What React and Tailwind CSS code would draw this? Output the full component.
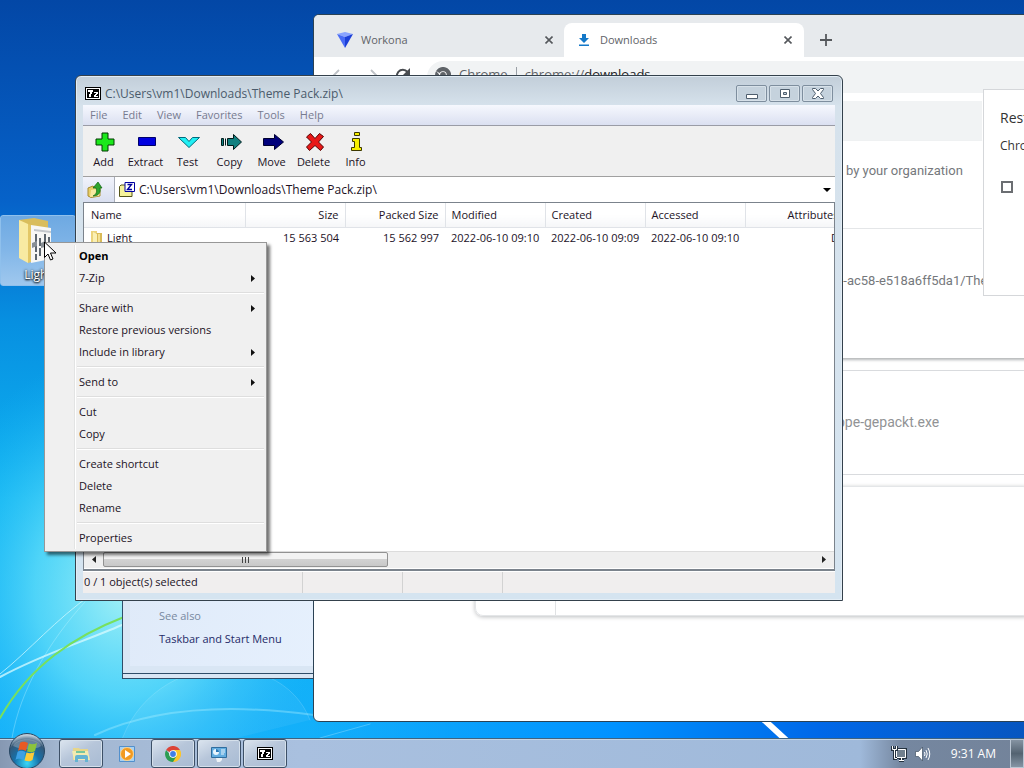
import React from "react";

const menuGroups = [
  [{ label: "Open", bold: true }, { label: "7-Zip", sub: true }],
  [
    { label: "Share with", sub: true },
    { label: "Restore previous versions" },
    { label: "Include in library", sub: true },
  ],
  [{ label: "Send to", sub: true }],
  [{ label: "Cut" }, { label: "Copy" }],
  [{ label: "Create shortcut" }, { label: "Delete" }, { label: "Rename" }],
  [{ label: "Properties" }],
];

const columns = [
  { label: "Name", value: "Light", width: "w-[161px]", align: "text-left pl-[7px]" },
  { label: "Size", value: "15 563 504", width: "w-[100px]", align: "text-right pr-[6px]" },
  { label: "Packed Size", value: "15 562 997", width: "w-[100px]", align: "text-right pr-[6px]" },
  { label: "Modified", value: "2022-06-10 09:10", width: "w-[100px]", align: "text-left pl-[6px]" },
  { label: "Created", value: "2022-06-10 09:09", width: "w-[100px]", align: "text-left pl-[6px]" },
  { label: "Accessed", value: "2022-06-10 09:10", width: "w-[100px]", align: "text-left pl-[6px]" },
  { label: "Attributes", value: "D", width: "w-[100px]", align: "text-right pr-[6px]" },
];

const toolbarItems = [
  {
    label: "Add",
    icon: <path d="M7 1h6v6h6v6h-6v6H7v-6H1V7h6z" fill="#1be81b" stroke="#003800" />,
  },
  {
    label: "Extract",
    icon: <path d="M1.5 5.5h17v8h-17z" fill="#0000e0" stroke="#00006a" />,
  },
  {
    label: "Test",
    icon: <path d="M-.5 5.5h7l3.5 4 3.500-4h7L10 15.500z" fill="#20f0f4" stroke="#006a7c" />,
  },
  {
    label: "Copy",
    icon: (
      <g fill="#108080" stroke="#001c1c">
        <path d="M.5 6.500h2v7h-2zM4.500 6.500v7" />
        <path d="M6.500 6.500h6v-4l8 7.500-8 7.500v-4h-6z" />
      </g>
    ),
  },
  {
    label: "Move",
    icon: <path d="M.5 6.500h11v-4l9 7.500-9 7.500v-4H.5z" fill="#00007c" stroke="#000030" />,
  },
  {
    label: "Delete",
    icon: (
      <path
        d="M5.500 1.500 10 6.500l4.500-5 4 3-5 5.500 5 5-3 3.500-5.500-5-5.500 5-3-3.500 5-5-5-5z"
        fill="#e81818"
        stroke="#500"
      />
    ),
  },
  {
    label: "Info",
    icon: (
      <path
        d="M7.500.5h5v3h-5zM5.500 6.500h7v9h2v3h-10v-3h3v-6h-2z"
        fill="#f8f000"
        stroke="#3c3800"
      />
    ),
  },
];

const segoe = "font-['Open_Sans','Noto_Sans',sans-serif]";

const SevenZipIcon = () => (
  <svg className="w-4 h-[13px] shrink-0" viewBox="0 0 16 13" shapeRendering="crispEdges">
    <rect width="16" height="13" fill="#000" />
    <rect x="1" y="1" width="14" height="11" fill="#fff" />
    <rect x="2" y="2" width="12" height="9" fill="#000" />
    <path d="M3 3h5v2H7v2H6v3H4V7h1V5H3z" fill="#fff" />
    <path d="M9 5h4v2h-1v1h-1v1h2v1H9V8h1V7h1V6H9z" fill="#fff" />
  </svg>
);

const ChromeIcon = ({ className, mono }) => (
  <svg className={className} viewBox="0 0 16 16">
    <path d="M8 8 1.100 4A8 8 0 0 1 15 4z" fill={mono ? "#5f6368" : "#dc4437"} />
    <path d="M8 8V4h7a8 8 0 0 1-7 12z" fill={mono ? "#5f6368" : "#fbc52c"} />
    <path d="M8 16A8 8 0 0 1 1.100 4L8 12l3.500-2z" fill={mono ? "#5f6368" : "#2c9d52"} />
    <circle cx="8" cy="8" r="3.800" fill="#fff" />
    <circle cx="8" cy="8" r="2.900" fill={mono ? "#5f6368" : "#3f7fe8"} />
  </svg>
);

const CloseIcon = () => (
  <svg className="w-2 h-2" viewBox="0 0 8 8">
    <path d="m.5.5 7 7m0-7-7 7" stroke="#55585c" strokeWidth="1.600" />
  </svg>
);

const Wallpaper = () => (
  <svg
    className="absolute inset-0 w-full h-full"
    viewBox="0 0 1024 768"
    preserveAspectRatio="none"
    aria-hidden="true"
  >
    <defs>
      <linearGradient id="sky" x1="0" y1="0" x2="0" y2="1">
        <stop offset="0" stopColor="#0347a6" />
        <stop offset=".26" stopColor="#0662c9" />
        <stop offset=".42" stopColor="#0790e1" />
        <stop offset=".65" stopColor="#0fb4f2" />
        <stop offset="1" stopColor="#14affb" />
      </linearGradient>
      <linearGradient id="east" x1="0" y1="0" x2="1" y2="0">
        <stop offset=".3" stopColor="#0092ff" stopOpacity="0" />
        <stop offset=".6" stopColor="#0092ff" />
        <stop offset=".8" stopColor="#0068e8" />
        <stop offset="1" stopColor="#0756c0" />
      </linearGradient>
      <radialGradient id="glow">
        <stop offset="0" stopColor="#b4f8f6" stopOpacity=".9" />
        <stop offset=".45" stopColor="#70e6fa" stopOpacity=".65" />
        <stop offset="1" stopColor="#18b8f8" stopOpacity="0" />
      </radialGradient>
    </defs>
    <rect width="1024" height="768" fill="url(#sky)" />
    <rect y="700" width="1024" height="68" fill="url(#east)" />
    <ellipse cx="125" cy="590" rx="200" ry="240" fill="url(#glow)" />
    <g fill="none" strokeLinecap="round">
      <path d="M115 768C130 650 280 640 310 720" fill="#fff" fillOpacity=".06" stroke="#fff" strokeOpacity=".14" />
      <path d="M0 677C40 655 80 643 122 625" stroke="#d8fbff" strokeWidth="2" strokeOpacity=".75" />
      <path d="M0 674C30 650 55 620 92 594" stroke="#d8fbff" strokeOpacity=".7" />
      <path d="M12 738C20 690 50 640 85 602" stroke="#d8fbff" strokeOpacity=".3" />
      <path d="M0 718C30 665 75 636 124 617" stroke="#78e05c" strokeWidth="2" />
      <path d="M95 735C160 705 240 705 314 715" stroke="#b8f4ff" strokeWidth="2" strokeOpacity=".35" />
      <path d="M320 738 370 724" stroke="#9fe4ff" strokeOpacity=".4" />
      <path d="m762 718 24 22" stroke="#fff" strokeWidth="6" />
    </g>
  </svg>
);

const BrowserTab = ({ icon, title, active }) => (
  <div
    className={`flex h-[34px] items-center text-[#5f6368] ${active ? "w-[240px] pl-3 pr-2 rounded-t-lg bg-white" : "w-[242px] pl-[15px] pr-[7px]"}`}
  >
    {icon}
    <span className="flex-1 pl-2 text-[11px]">{title}</span>
    <button type="button" aria-label={`Close ${title}`} className="p-1">
      <CloseIcon />
    </button>
  </div>
);

const BrowserWindow = () => (
  <section
    className={`absolute left-[313px] -right-2 top-[14px] h-[708px] overflow-hidden rounded-md border border-[#2b4254] bg-white ${segoe}`}
  >
    <div className="flex h-[42px] pt-2 pl-2 items-start bg-[#e7eaed]">
      <BrowserTab
        title="Workona"
        icon={
          <svg className="w-4 h-4" viewBox="0 0 16 16">
            <path d="M0 2 8 0l8 2-8 3z" fill="#8aa4ff" />
            <path d="m0 2 8 3v11z" fill="#4a6cf5" />
            <path d="m16 2-8 3v11z" fill="#1c3fd8" />
          </svg>
        }
      />
      <BrowserTab
        active
        title="Downloads"
        icon={
          <svg className="w-4 h-4" viewBox="0 0 16 16">
            <path d="M6 2h4v4h3l-5 5-5-5h3zM3 12.500h10v1.500H3z" fill="#1478c8" />
          </svg>
        }
      />
      <button type="button" aria-label="New tab" className="p-4 pt-[11px]">
        <svg className="w-3 h-3" viewBox="0 0 12 12">
          <path d="M6 0v12M0 6h12" stroke="#55585c" strokeWidth="1.800" />
        </svg>
      </button>
    </div>

    <div className="flex h-9 pt-1 pl-[17px] items-start border-b border-[#dcdee1]">
      <div className="flex pt-[7px] gap-4">
        <button type="button" aria-label="Back">
          <svg className="w-4 h-4" viewBox="0 0 16 16" fill="none">
            <path d="M15 8H2m6-6L2 8l6 6" stroke="#bdc1c6" strokeWidth="1.800" />
          </svg>
        </button>
        <button type="button" aria-label="Forward">
          <svg className="w-4 h-4" viewBox="0 0 16 16" fill="none">
            <path d="M1 8h13M8 2l6 6-6 6" stroke="#bdc1c6" strokeWidth="1.800" />
          </svg>
        </button>
        <button type="button" aria-label="Reload">
          <svg className="w-4 h-4" viewBox="0 0 16 16" fill="none">
            <path d="M13.500 10A6 6 0 1 1 12.500 4" stroke="#484c50" strokeWidth="2" />
            <path d="M15 0v7H8z" fill="#484c50" />
          </svg>
        </button>
      </div>
      <div className="flex h-8 ml-4 pl-2 flex-1 items-center rounded-l-full bg-[#f1f3f4] text-[13px] text-[#5f6368]">
        <ChromeIcon mono className="w-4 h-4 -mt-1" />
        <span className="pl-2 pb-1">Chrome</span>
        <span className="h-4 mx-2 mb-1 border-l border-[#9aa0a6]" />
        <span className="pb-1">
          chrome://<span className="text-[#202124]">downloads</span>
        </span>
      </div>
    </div>

    {/* downloads page */}
    <div className="font-[Roboto,sans-serif] text-[13px] text-[#75787c]">
      <div className="mt-2 h-10 w-[668px] bg-[#f1f3f4]" />
      <div className="ml-[161px] h-[217px] rounded-bl-lg shadow-[0_2px_3px_#b4b6b8] whitespace-nowrap">
        <p className="h-[88px] w-[507px] pt-5 pl-[371px] border-b border-[#e4e6e8]">by your organization</p>
        <p className="pt-[42px] pl-[361px]">0-ac58-e518a6ff5da1/Theme Pack.zip</p>
      </div>
      <div className="ml-[161px] mt-3 h-[105px] border-y border-[#d9dbde]">
        <p className="pt-[41px] pl-[354px] text-[14px] text-[#919395]">oppe-gepackt.exe</p>
      </div>
      <div className="ml-[161px] mt-[11px] flex h-[130px] rounded-lg border border-[#e4e6e8] shadow-[0_1px_4px_#bcbec0]">
        <div className="w-20 border-r border-[#e0e2e4]" />
      </div>
    </div>

    {/* restore prompt */}
    <aside className="absolute right-0 top-[74px] flex w-12 h-[207px] pl-4 pt-[18px] flex-col overflow-hidden border border-[#d5d7da] bg-white whitespace-nowrap text-[#333]">
      <h2 className="text-[14px] leading-5">Restore pages?</h2>
      <p className="pt-2 text-[12px] leading-5">Chrome didn't shut down correctly.</p>
      <label className="flex pt-[25px] pl-px gap-4">
        <input
          type="checkbox"
          aria-label="Send crash reports"
          className="w-3 h-3 shrink-0 appearance-none border-2 border-[#6b6e72] bg-white"
        />
      </label>
    </aside>
  </section>
);

const ControlPanelWindow = () => (
  <section
    className={`absolute left-[122px] top-[520px] w-[300px] h-[159px] border border-[#2f4d68] bg-[#d9e6f4] ${segoe}`}
  >
    <div className="flex h-[153px] pl-[7px] pb-[7px] border-b border-[#2f4d68]">
      <div className="flex-1 pt-[85px] pl-[29px] bg-[linear-gradient(100deg,#dfeaf9,#e9f3ff)] text-[11px]">
        <p className="leading-5 text-[#7889a0]">See also</p>
        <a href="#taskbar" className="block pt-[3px] leading-5 text-[#1f2b68]">
          Taskbar and Start Menu
        </a>
      </div>
    </div>
  </section>
);

const captionButton =
  "flex w-[31px] h-[17px] border border-[#7e8e9e] rounded-[2px] bg-[#c5d2dd] shadow-[inset_0_0_0_1px_#d7e1e9] items-center justify-center";

const ArchiveWindow = () => (
  <section
    className={`absolute left-[75px] top-[75px] flex w-[768px] h-[526px] px-[7px] pb-[7px] flex-col border border-[#34414c] rounded-t-md bg-[linear-gradient(180deg,#c2ced9_0px,#d6e2ec_30px,#d5e4f0_100%)] shadow-[inset_0_0_0_1px_#e3edf5] text-[11px] text-[#22121f] ${segoe}`}
  >
    <header className="flex h-[29px] shrink-0 pl-[2px] items-center gap-1">
      <span className="pt-[6px]"><SevenZipIcon /></span>
      <h1 className="flex-1 pt-[6px] text-[12px] text-[#4b5b6c]">C:\Users\vm1\Downloads\Theme Pack.zip\</h1>
      <div className="flex pt-[6px] pr-[2px] gap-[2px]">
        <button type="button" aria-label="Minimize" className={captionButton}>
          <svg className="w-3 h-[11px]" viewBox="0 0 12 11">
            <path d="M.5 6.500h11v4H.5z" fill="#fff" stroke="#4e5e6e" />
          </svg>
        </button>
        <button type="button" aria-label="Maximize" className={captionButton}>
          <svg className="w-3 h-[11px]" viewBox="0 0 12 11">
            <path d="M1.500 1.500h9v8h-9z" fill="#fff" stroke="#4e5e6e" />
            <path d="M4.500 4.500h3v2h-3z" fill="#c5d2dd" stroke="#4e5e6e" />
          </svg>
        </button>
        <button type="button" aria-label="Close" className={captionButton}>
          <svg className="w-3 h-[11px]" viewBox="0 0 12 11">
            <path
              d="M.5.5h3L6 3 8.500.5h3v1L8.500 5.500l3 4v1h-3L6 8l-2.500 2.500h-3v-1l3-4-3-4z"
              fill="#fff"
              stroke="#4e5e6e"
            />
          </svg>
        </button>
      </div>
    </header>

    <nav className="flex h-[21px] shrink-0 pl-[7px] gap-[15px] items-center border-b border-[#9a9ca6] bg-[linear-gradient(180deg,#f6f8fe,#dbe0f1)] text-[#777b90]">
      {["File", "Edit", "View", "Favorites", "Tools", "Help"].map((label) => (
        <button type="button" key={label}>{label}</button>
      ))}
    </nav>

    <div className="flex h-[51px] shrink-0 border-b border-[#a0a0a0] bg-[#f0f0f0]">
      {toolbarItems.map((item) => (
        <button
          type="button"
          key={item.label}
          className="flex w-[42px] pt-[6px] pr-px flex-col items-center"
        >
          <svg className="w-5 h-5 ml-[2px] overflow-visible" viewBox="0 0 20 20">{item.icon}</svg>
          <span className="leading-5">{item.label}</span>
        </button>
      ))}
    </div>

    <div className="flex h-[25px] shrink-0 bg-white">
      <button type="button" aria-label="Up one level" className="flex w-8 pl-1 items-center border-r border-[#a9adb8] bg-[linear-gradient(180deg,#f1f3fb,#d9dff0)]">
        <svg className="w-4 h-4" viewBox="0 0 16 16">
          <path d="M1 6l5-2 1 1h6v9l-9 1.500L1 14z" fill="#e8cf68" stroke="#a88c30" />
          <path d="m4 8 10-2-2 8-9 1z" fill="#f8e9a0" />
          <path d="M6 14c4-2 4-5 3-8H6l5-6 4 6h-2c1 4-1 8-7 8z" fill="#2fa52c" stroke="#0d6210" strokeWidth=".7" />
        </svg>
      </button>
      <label className="flex flex-1 pl-1 items-center">
        <svg className="w-4 h-4" viewBox="0 0 16 16">
          <path d="M.5 4.500 2 3h5v2h6v9.500H.5z" fill="#f6f39a" stroke="#55551a" />
          <path d="M6 .5h9.500v9H6z" fill="#fff" stroke="#0000a0" />
          <path d="M8.500 2.500h4l-4 5h4.500" fill="none" stroke="#0000a0" strokeWidth="1.400" />
        </svg>
        <input
          type="text"
          aria-label="Address"
          defaultValue="C:\Users\vm1\Downloads\Theme Pack.zip\"
          className="min-w-0 flex-1 pl-1 pt-px text-[12px] bg-transparent outline-none"
        />
      </label>
      <button type="button" aria-label="Address history" className="px-1">
        <svg className="w-2 h-1" viewBox="0 0 8 4"><path d="M0 0h8L4 4z" fill="#000" /></svg>
      </button>
    </div>

    <div className="flex min-h-0 flex-1 flex-col border border-b-2 border-[#7b838c] bg-white">
      <div className="min-h-0 flex-1 overflow-hidden">
        <table className="w-[761px] border-collapse table-fixed whitespace-nowrap">
          <thead>
            <tr>
              {columns.map((column) => (
                <th
                  key={column.label}
                  className={`h-6 border-r border-b border-[#e0e3e8] bg-[linear-gradient(180deg,#fff_50%,#f5f6f8)] font-normal ${column.width} ${column.align}`}
                >
                  {column.label}
                </th>
              ))}
            </tr>
          </thead>
          <tbody>
            <tr>
              {columns.map((column, index) => (
                <td key={column.label} className={`h-[21px] ${column.align}`}>
                  {index === 0 ? (
                    <span className="flex items-center gap-1">
                      <svg className="w-3 h-4" viewBox="0 0 12 16">
                        <path d="M0 1h6v14H0z" fill="#ecd47c" />
                        <path d="M5 3h6v12H5z" fill="#d9ba58" />
                        <path d="M2 2 6 4v12l-4-1z" fill="#faf0b4" />
                        <path d="M7 4h2v11H7z" fill="#f3e193" />
                      </svg>
                      {column.value}
                    </span>
                  ) : (
                    column.value
                  )}
                </td>
              ))}
            </tr>
          </tbody>
        </table>
      </div>
      <div className="flex h-[17px] shrink-0 mb-px pr-2 pb-px items-center border-t border-[#dcdcdc] bg-[#efefef]">
        <button type="button" aria-label="Scroll left" className="flex w-[19px] justify-center">
          <svg className="w-1 h-[7px]" viewBox="0 0 4 7"><path d="M4 0v7L0 3.500z" fill="#222" /></svg>
        </button>
        <div className="flex flex-1">
          <div className="flex w-[285px] h-[15px] items-center justify-center gap-[2px] border border-[#929292] rounded-[2px] bg-[linear-gradient(180deg,#f3f3f3_45%,#d2d2d2_50%,#c8c8c8)]">
            <i className="w-px h-[6px] bg-[#444]" />
            <i className="w-px h-[6px] bg-[#444]" />
            <i className="w-px h-[6px] bg-[#444]" />
          </div>
        </div>
        <button type="button" aria-label="Scroll right" className="flex w-1 justify-center">
          <svg className="w-1 h-[7px]" viewBox="0 0 4 7"><path d="M0 0v7l4-3.500z" fill="#222" /></svg>
        </button>
      </div>
    </div>

    <footer className="flex h-[22px] shrink-0 border-t border-white bg-[#f0eeee] leading-5">
      <span className="w-[220px] pl-px border-r border-[#d2d2d2]">0 / 1 object(s) selected</span>
      <span className="w-[100px] border-r border-[#d2d2d2]" />
      <span className="w-[100px] border-r border-[#d2d2d2]" />
    </footer>
  </section>
);

const ContextMenu = () => (
  <div
    role="menu"
    className={`absolute left-11 top-[242px] w-[223px] p-[2px] border border-[#979797] bg-[#f0f0f0] shadow-[3px_3px_3px_rgb(0_0_0_/_55%)] text-[11px] text-[#22121f] ${segoe}`}
  >
    <div className="bg-[linear-gradient(90deg,transparent_27px,#e2e3e3_27px,#e2e3e3_28px,#fff_28px,#fff_29px,transparent_29px)]">
      {menuGroups.map((group, index) => (
        <div key={group[0].label}>
          {index > 0 && <div className="h-[2px] my-[3px] ml-[30px] border-t border-b border-t-[#dedede] border-b-white" />}
          {group.map((item) => (
            <button
              type="button"
              role="menuitem"
              key={item.label}
              className="flex w-full h-[22px] pl-8 pr-[9px] items-center justify-between"
            >
              <span className={item.bold ? "font-bold text-black" : ""}>{item.label}</span>
              {item.sub && (
                <svg className="w-1 h-[7px]" viewBox="0 0 4 7"><path d="M0 0v7l4-3.500z" fill="#111" /></svg>
              )}
            </button>
          ))}
        </div>
      ))}
    </div>
  </div>
);

const DesktopIcon = () => (
  <button
    type="button"
    className={`absolute left-0 top-[215px] flex w-[76px] h-[71px] pt-px flex-col items-center border border-[#8fc0ec] rounded-[3px] bg-[linear-gradient(180deg,#6ea9e2,#82b6e8_50%,#9fc8ee)] ${segoe}`}
  >
    <svg className="w-9 h-12 mr-1" viewBox="0 0 36 48">
      <path d="M1 3 16 1l14 3v33l-15 8L1 41z" fill="#d9bd5c" />
      <path d="m13 8 20 3v31l-20 4z" fill="#f7f7f5" />
      <path d="m16 12 17 2v2l-17-2z" fill="#c4c8cc" />
      <path d="M18 17v26m4-22v18m5-22v22m4-19v14" stroke="#5d666e" strokeWidth="2" strokeDasharray="8 2" />
      <path d="m14 26 5-2v5l-5 2zm9 0 4-2v6l-4 1z" fill="#888f95" />
      <path d="M1 3 10 7v39l-9-5z" fill="#f8eaa2" />
      <path d="m10 7 3 1v37l-3 1z" fill="#e3c766" />
    </svg>
    <span className="pt-[2px] text-[12px] leading-4 text-white [text-shadow:0_1px_2px_#000,0_0_3px_#000]">Light</span>
  </button>
);

const taskButton =
  "flex w-11 h-[29px] border border-[#3d5067] rounded-[3px] bg-[linear-gradient(150deg,#dce5ef,#b7c6da_45%,#a8bbd3)] shadow-[inset_0_0_0_1px_#d5e0eb] items-center justify-center";

const Taskbar = () => (
  <footer
    className={`absolute inset-x-0 bottom-0 flex h-[30px] items-start border-t border-[#3f6380] bg-[linear-gradient(90deg,#8698b2_0px,#a3b7d1_60px,#a9c0df_300px,#9fb9da_84%,#7587a0_88%,#73839a_100%)] shadow-[inset_0_1px_0_#c4d5e6] ${segoe}`}
  >
    <button type="button" aria-label="Start" className="w-9 h-9 ml-[9px] -mt-[6px]">
      <svg className="w-9 h-9" viewBox="0 0 36 36">
        <defs>
          <radialGradient id="orb" cx=".5" cy=".85" r=".8">
            <stop offset="0" stopColor="#38d8f8" />
            <stop offset=".45" stopColor="#1670a8" />
            <stop offset=".8" stopColor="#355878" />
            <stop offset="1" stopColor="#bfccd8" />
          </radialGradient>
        </defs>
        <circle cx="18" cy="18" r="17.500" fill="url(#orb)" stroke="#274662" />
        <path d="M4 13C7 4 29 4 32 13 25 18 10 16 4 13z" fill="#fff" opacity=".25" />
        <path d="M11 10c3-2 5-1 8 0l-2 8c-3-1-5-2-8 0z" fill="#e85a24" />
        <path d="M20 10.500c3 1 5 1 8-.5l-2 8c-3 2-5 1-8 .5z" fill="#8cc43c" />
        <path d="M8.500 19c3-2 5-1 8 0l-2 8c-3-1-5-2-8 0z" fill="#3da0e4" />
        <path d="M17.500 19.500c3 1 5 1 8-.5l-2 8c-3 2-5 1-8 .5z" fill="#fccb38" />
      </svg>
    </button>
    <div className="flex pl-[14px] gap-[2px]">
      <button type="button" aria-label="Windows Explorer" className={taskButton}>
        <svg className="w-[18px] h-4" viewBox="0 0 18 16">
          <path d="M1 2h6l1 1h8v11H1z" fill="#e7d68a" />
          <path d="M0 5h16l2 9H2z" fill="#f3ebb0" />
          <path d="M3 16v-5q0-2 2-2h9q2 0 2 2v5h-3v-3H6v3z" fill="#65b4d2" />
          <path d="M4 5h9v2H4z" fill="#77c69c" />
        </svg>
      </button>
      <button type="button" aria-label="Media Player" className="flex w-11 h-[29px] items-center justify-center">
        <svg className="w-4 h-4" viewBox="0 0 16 16">
          <path d="M.5.5h15v15H.5z" fill="#a9d1f2" stroke="#5290cc" />
          <circle cx="8" cy="8" r="6.500" fill="#f29a20" stroke="#fbd490" />
          <path d="M6 4v8l6-4z" fill="#fff" />
        </svg>
      </button>
      <button type="button" aria-label="Chrome" className={taskButton}>
        <ChromeIcon className="w-4 h-4" />
      </button>
      <button type="button" aria-label="Control Panel" className={taskButton}>
        <svg className="w-4 h-4" viewBox="0 0 16 16">
          <path d="M.5 1.500h15v10H.5z" fill="#62ade0" stroke="#2f6d9e" />
          <circle cx="5" cy="6" r="3" fill="#e8f5fd" />
          <path d="M5 6V3a3 3 0 0 1 3 3z" fill="#2878b8" />
          <path d="M10 4h4M10 6h4M10 8h3" stroke="#e8f5fd" />
          <path d="M5 12h6v2l-2 2H6z" fill="#eef2f5" />
        </svg>
      </button>
      <button type="button" aria-label="7-Zip" className={taskButton}>
        <SevenZipIcon />
      </button>
    </div>
    <div className="ml-auto flex h-full items-center">
      <svg className="w-4 h-4" viewBox="0 0 16 16" fill="none">
        <path d="M5.500 3.500h9v8h-9zM8 14.500h5M10.500 12v2" stroke="#24323f" strokeWidth="3" />
        <path d="M5.500 3.500h9v8h-9zM8 14.500h5M10.500 12v2" fill="#71808e" stroke="#fff" />
        <path d="M1.500 0v3.500h4V0M3.500 4v8.500H6" stroke="#24323f" strokeWidth="3" />
        <path d="M1.500 0v3.500h4V0M3.500 4v8.500H6" stroke="#fff" />
      </svg>
      <svg className="w-4 h-4 ml-2" viewBox="0 0 16 16" fill="none">
        <path d="M.5 5.500h3L7.500 1v14l-4-4.500h-3z" fill="#fff" stroke="#415062" strokeWidth=".7" />
        <path d="M9.500 6q1 2 0 4m1.500-6q2.500 4 0 8m2-10q3.500 6 0 12" stroke="#fff" />
      </svg>
      <time className="pl-5 pr-[14px] text-[12px] text-white">9:31 AM</time>
      <button
        type="button"
        aria-label="Show desktop"
        className="w-[14px] h-[29px] border border-[#b9c5d2] bg-[linear-gradient(180deg,#8593a2,#536371_50%,#8494a4)]"
      />
    </div>
  </footer>
);

const App = () => (
  <main className="relative w-full h-screen overflow-hidden">
    <Wallpaper />
    <ControlPanelWindow />
    <BrowserWindow />
    <DesktopIcon />
    <ArchiveWindow />
    <ContextMenu />
    <svg className="absolute left-11 top-[241px] w-[13px] h-5" viewBox="0 0 13 20">
      <path d="M.5 1v15.500L4 13l2.500 6L9 18l-2.500-6h5.500z" fill="#fff" stroke="#000" />
    </svg>
    <Taskbar />
  </main>
);

export default App;
